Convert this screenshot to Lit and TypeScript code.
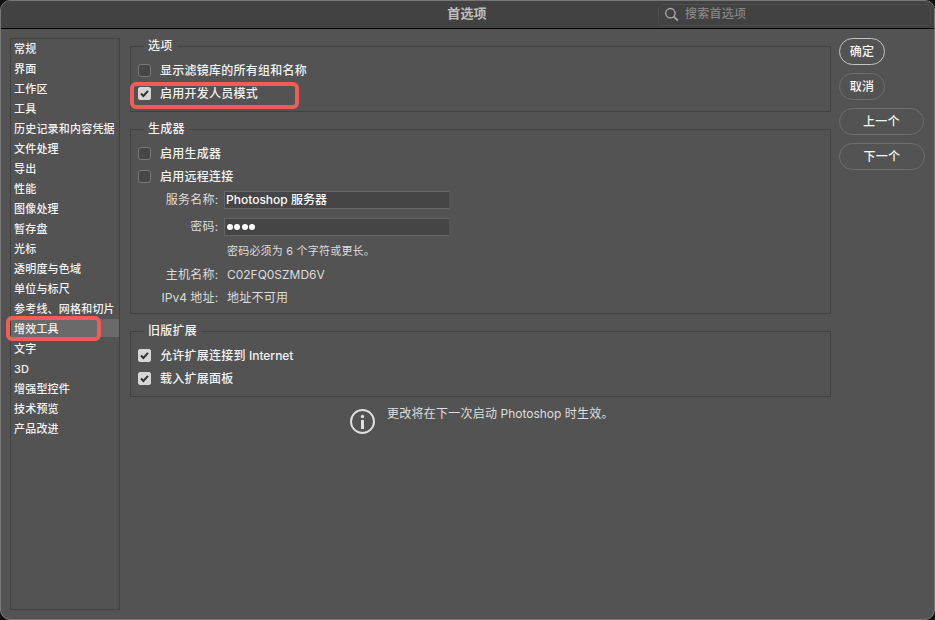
import { LitElement, html, css, svg, nothing } from "lit";
import { customElement, property } from "lit/decorators.js";
import { classMap } from "lit/directives/class-map.js";

const PAGES = [
  "常规", "界面", "工作区", "工具", "历史记录和内容凭据", "文件处理", "导出",
  "性能", "图像处理", "暂存盘", "光标", "透明度与色域", "单位与标尺",
  "参考线、网格和切片", "增效工具", "文字", "3D", "增强型控件", "技术预览", "产品改进",
];

@customElement("pref-check")
class PrefCheck extends LitElement {
  @property({ type: Boolean }) checked = false;

  static styles = css`
    :host { display: flex; align-items: center; height: 23px; padding-left: 7px; }
    .box {
      box-sizing: border-box; width: 13px; height: 13px; flex: none;
      border: 1px solid #787878; border-radius: 3px; background: #464646;
    }
    .on { background: #d6d6d6; border-color: #d6d6d6; border-radius: 2px; }
    svg { display: block; width: 11px; height: 11px; }
    .text { margin-left: 9px; line-height: 18px; white-space: nowrap; }
  `;

  render() {
    return html`
      <span class=${classMap({ box: true, on: this.checked })}>
        ${this.checked
          ? html`<svg viewBox="0 0 11 11">${svg`<path d="M2 5.5 4.4 8 9 2.8" fill="none" stroke="#333" stroke-width="2"/>`}</svg>`
          : nothing}
      </span>
      <span class="text"><slot></slot></span>
    `;
  }
}

@customElement("pref-group")
class PrefGroup extends LitElement {
  @property() legend = "";

  static styles = css`
    :host { display: block; box-sizing: border-box; border: 1px solid #424242; }
    .legend {
      width: max-content; height: 18px; line-height: 18px;
      margin: -10px 0 4px 13px; padding: 0 4px; background: #535353;
    }
  `;

  render() {
    return html`<div class="legend">${this.legend}</div><slot></slot>`;
  }
}

@customElement("app-root")
class AppRoot extends LitElement {
  static styles = css`
    :host {
      display: block; width: 935px; height: 620px; background: #101010; overflow: hidden;
      font: 500 12px/18px Inter, "Noto Sans CJK SC", sans-serif;
      letter-spacing: 0.25px; color: #f2f2f2;
    }
    .window {
      box-sizing: border-box; width: 935px; height: 620px; overflow: hidden;
      border: 1px solid #777; border-radius: 10px; background: #535353;
      display: flex; flex-direction: column;
    }
    .titlebar {
      box-sizing: border-box; height: 28px; flex: none; background: #424242;
      border-bottom: 1px solid #000;
      display: grid; grid-template-columns: 275px 1fr 273px 3px; align-items: center;
    }
    .title {
      grid-column: 2; text-align: center; font-weight: 700; font-size: 13px; color: #bdbdbd;
      letter-spacing: 0.1px; line-height: 23px; height: 26px;
    }
    .search {
      box-sizing: border-box; height: 22px; border: 1px solid #4d4d4d; border-radius: 5px;
      display: flex; align-items: center; color: #858585; gap: 6px; padding-left: 5px;
    }
    .search svg { width: 15px; height: 15px; flex: none; }
    .search span { line-height: 18px; margin-top: -1px; }
    .body { flex: 1; display: flex; padding: 9px 0 9px 9px; }
    .nav {
      box-sizing: border-box; width: 110px; height: 572px; flex: none;
      border: 1px solid #424242;
      font-size: 11px; letter-spacing: 0.2px;
    }
    .item { height: 18px; line-height: 21px; margin-bottom: 2px; padding-left: 3px; white-space: nowrap; }
    .selected { background: #6a6a6a; }
    .main { width: 701px; margin-left: 10px; padding-top: 8px; flex: none; }
    .options { height: 66px; }
    .generator { height: 185px; margin-top: 17px; }
    .legacy { height: 66px; margin-top: 17px; }
    .latin { letter-spacing: -0.02px; }
    .row { display: flex; align-items: center; height: 23px; color: #dcdcdc; font-weight: 400; }
    .label { width: 87.5px; text-align: right; flex: none; }
    .value { margin-left: 8.5px; white-space: nowrap; }
    .field {
      box-sizing: border-box; width: 225px; height: 18px; margin-left: 5.5px; padding-left: 1px;
      border: 1px solid #656565; border-right: 0; background: #454545; color: #fafafa;
      line-height: 16px; font-weight: 500; letter-spacing: 0; white-space: pre;
    }
    .dots { display: flex; align-items: center; gap: 1.4px; padding-left: 1.8px; }
    .dot { width: 6px; height: 6px; border-radius: 50%; background: #fff; }
    .tall { height: 31px; }
    .hint { font-size: 11px; letter-spacing: 0.2px; height: 18px; margin-bottom: 3px; }
    .notice {
      display: flex; align-items: flex-start; margin: 8px 0 0 219px; color: #dedede; font-weight: 400;
    }
    .notice svg { width: 26px; height: 26px; margin-top: 4px; }
    .notice .message { margin-left: 12px; }
    .actions { margin-left: 8px; display: flex; flex-direction: column; gap: 8px; }
    .btn {
      box-sizing: border-box; height: 27px; border: 1.5px solid #6f6f6f; border-radius: 14px;
      display: flex; justify-content: center; line-height: 25px; color: #f5f5f5;
    }
    .short { width: 46px; }
    .prev { width: 85px; }
    .next { width: 86px; }
    .primary { border-color: #c4c4c4; }
    .mark { position: absolute; box-sizing: border-box; border: 4px solid #f35b56; border-radius: 6px; }
    .mark-nav { left: 6px; top: 316px; width: 95px; height: 25px; }
    .mark-dev { left: 130px; top: 82px; width: 169px; height: 27px; }
  `;

  render() {
    return html`
      <div class="window">
        <header class="titlebar">
          <div class="title">首选项</div>
          <div class="search">
            <svg viewBox="0 0 15 15" fill="none" stroke="#a8a8a8">
              <circle cx="6.4" cy="6.2" r="4.7" stroke-width="1.4" />
              <path d="m9.8 9.7 4 4" stroke-width="1.9" />
            </svg>
            <span>搜索首选项</span>
          </div>
        </header>
        <div class="body">
          <nav class="nav">
            ${PAGES.map((p) => html`<div class=${classMap({ item: true, selected: p === "增效工具" })}>${p}</div>`)}
          </nav>
          <main class="main">
            <pref-group class="options" legend="选项">
              <pref-check>显示滤镜库的所有组和名称</pref-check>
              <pref-check checked>启用开发人员模式</pref-check>
            </pref-group>
            <pref-group class="generator" legend="生成器">
              <pref-check>启用生成器</pref-check>
              <pref-check>启用远程连接</pref-check>
              <div class="row">
                <span class="label">服务名称:</span><div class="field">Photoshop 服务器</div>
              </div>
              <div class="row tall">
                <span class="label">密码:</span>
                <div class="field dots">${[0, 1, 2, 3].map(() => html`<i class="dot"></i>`)}</div>
              </div>
              <div class="row hint"><span class="label"></span><span class="value">密码必须为 6 个字符或更长。</span></div>
              <div class="row"><span class="label">主机名称:</span><span class="value latin">C02FQ0SZMD6V</span></div>
              <div class="row"><span class="label"><span class="latin">IPv4 </span>地址:</span><span class="value">地址不可用</span></div>
            </pref-group>
            <pref-group class="legacy" legend="旧版扩展">
              <pref-check checked>允许扩展连接到<span class="latin"> Internet</span></pref-check>
              <pref-check checked>载入扩展面板</pref-check>
            </pref-group>
            <div class="notice">
              <svg viewBox="0 0 26 26">
                <circle cx="13.5" cy="12.5" r="11.5" fill="none" stroke="#dedede" stroke-width="2" />
                <circle cx="13.5" cy="7.5" r="1.7" fill="#dedede" />
                <path d="M12 11h3v9h-3z" fill="#dedede" />
              </svg>
              <span class="message">更改将在下一次启动<span class="latin"> Photoshop </span>时生效。</span>
            </div>
          </main>
          <div class="actions">
            <div class="btn short primary">确定</div>
            <div class="btn short">取消</div>
            <div class="btn prev">上一个</div>
            <div class="btn next">下一个</div>
          </div>
        </div>
      </div>
      <div class="mark mark-nav"></div>
      <div class="mark mark-dev"></div>
    `;
  }
}
